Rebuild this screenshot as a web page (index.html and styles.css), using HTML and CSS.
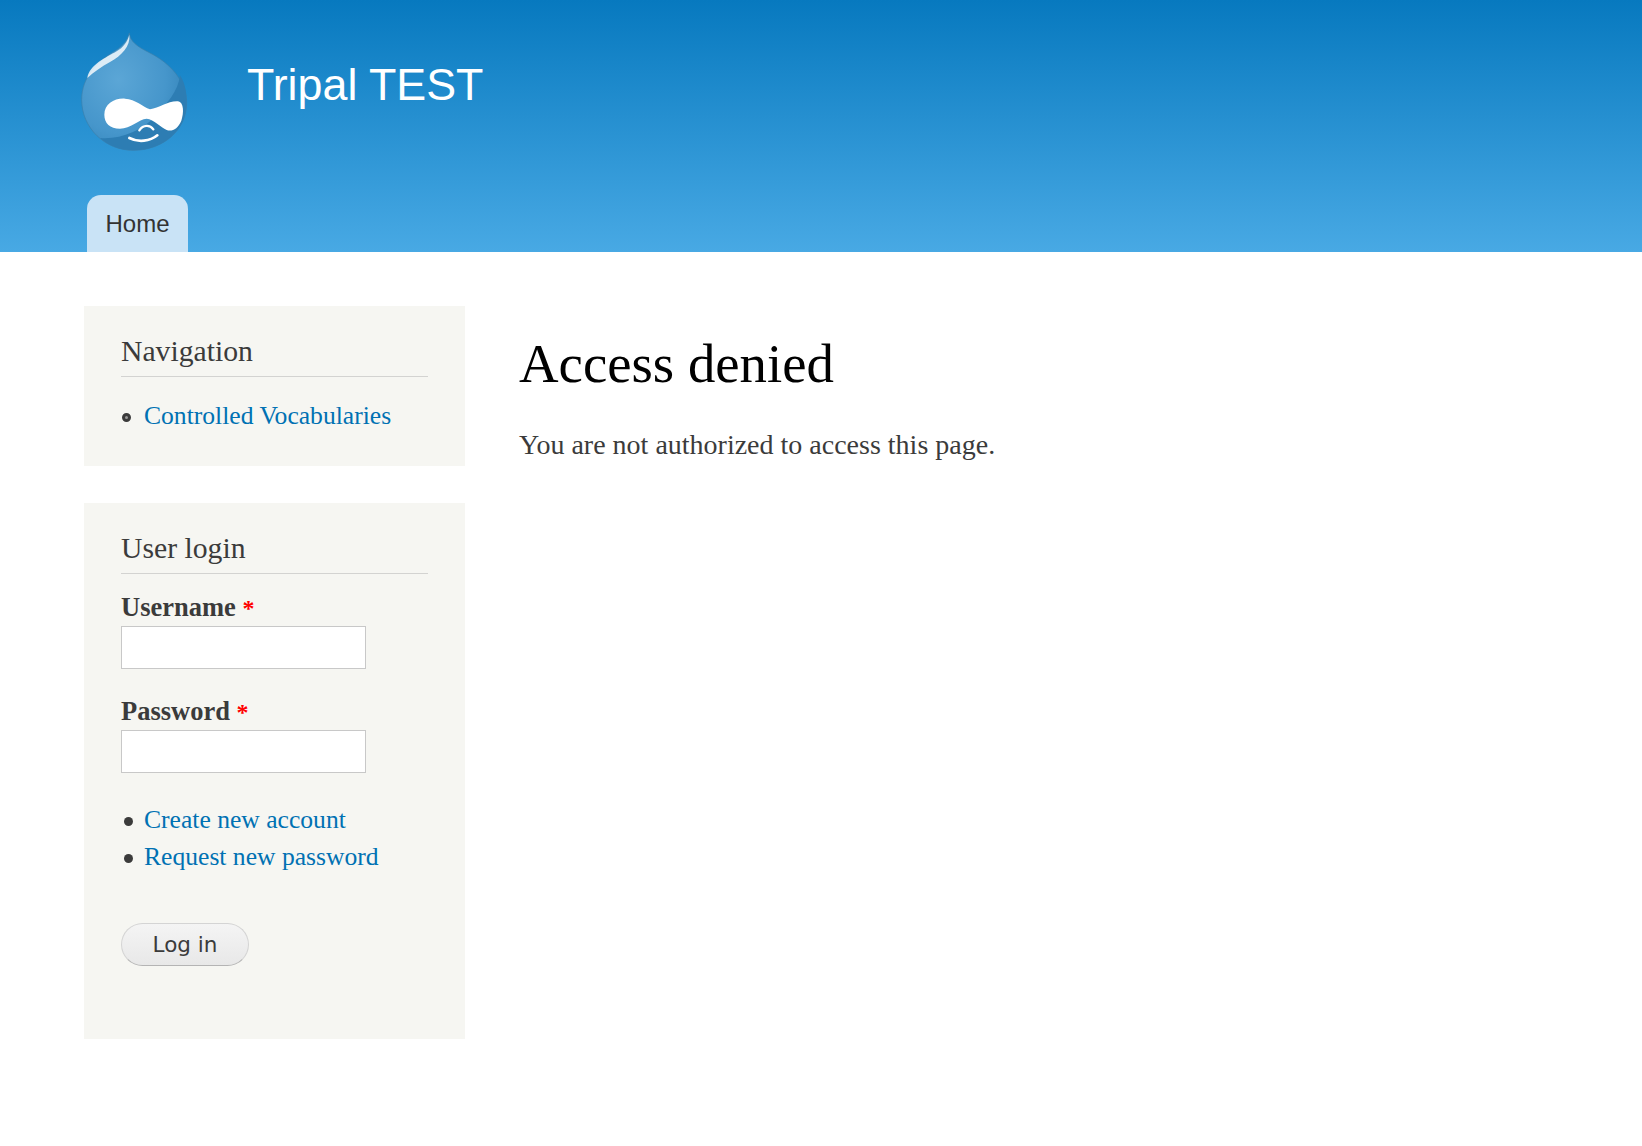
FILE: index.html
```html
<!DOCTYPE html>
<html lang="en">
<head>
    <title>Access denied | Tripal TEST</title>
    <meta charset="UTF-8" />
    <link rel="stylesheet" href="styles.css">
</head>
<body>
    <header class="site-header">
        <div class="branding">
            <a class="logo" href="#" aria-label="Home">
                <svg width="130" height="140" viewBox="0 0 390 420">
                    <defs>
                        <radialGradient id="dropFill" cx="0.35" cy="0.4" r="0.75">
                            <stop offset="0" stop-color="#5ba6d6"/>
                            <stop offset="0.6" stop-color="#4696cb"/>
                            <stop offset="1" stop-color="#2f80b6"/>
                        </radialGradient>
                    </defs>
                    <path fill="url(#dropFill)" stroke="#3a7fab" stroke-width="2" d="M178 45C180 70 200 85 240 105C300 135 350 190 350 255C350 335 280 397 190 397C105 397 35 330 35 245C35 175 85 130 125 105C155 88 172 70 178 45Z"/>
                    <path fill="#2d7db3" d="M330 172C348 200 350 230 350 255C350 335 280 397 190 397C150 397 115 383 90 360C150 365 215 340 255 295C290 258 325 220 330 172Z"/>
                    <path fill="#fff" opacity="0.8" d="M52 180C58 140 110 118 140 100C160 88 172 72 178 50C182 85 155 112 120 132C95 146 72 162 52 180Z"/>
                    <path fill="#fff" d="M103 290C103 258 133 240 165 242C197 244 218 266 240 274C268 270 295 248 324 250C342 253 342 285 334 308C324 332 306 342 290 336C272 328 252 304 230 302C206 304 182 332 150 332C120 332 103 316 103 290Z"/>
                    <path fill="none" stroke="#fff" stroke-width="8" stroke-linecap="round" d="M178 360C205 374 240 370 262 352"/>
                    <path fill="none" stroke="#fff" stroke-width="7" stroke-linecap="round" d="M208 337C220 320 240 320 250 334"/>
                </svg>
            </a>
            <div class="site-name">Tripal TEST</div>
        </div>
        <nav class="tabs">
            <a class="tab" href="#">Home</a>
        </nav>
    </header>

    <div class="layout">
        <aside class="sidebar">
            <section class="block block-nav">
                <h2>Navigation</h2>
                <ul class="links">
                    <li class="leaf"><a href="#">Controlled Vocabularies</a></li>
                </ul>
            </section>

            <section class="block block-login">
                <h2>User login</h2>
                <form>
                    <div class="field">
                        <label for="username">Username <span class="required">*</span></label>
                        <input type="text" id="username">
                    </div>
                    <div class="field">
                        <label for="password">Password <span class="required">*</span></label>
                        <input type="password" id="password">
                    </div>
                    <ul class="links login-links">
                        <li><a href="#">Create new account</a></li>
                        <li><a href="#">Request new password</a></li>
                    </ul>
                    <button type="button" class="btn">Log in</button>
                </form>
            </section>
        </aside>

        <main class="content">
            <h1>Access denied</h1>
            <p>You are not authorized to access this page.</p>
        </main>
    </div>
</body>
</html>
```

FILE: styles.css
```css
body {
    margin: 0;
    font-family: "Liberation Serif", serif;
    color: #3b3b3b;
    background: #fff;
}

a {
    color: #0071b3;
    text-decoration: none;
}

/* Header */
.site-header {
    height: 252px;
    display: flex;
    flex-direction: column;
    justify-content: space-between;
    background: linear-gradient(to bottom, #0779bf, #48a9e4);
}

.branding {
    display: flex;
    padding: 18px 0 0 70px;
}

.logo {
    display: block;
    height: 140px;
}

.site-name {
    margin: 36px 0 0 47px;
    font-family: "Liberation Sans", sans-serif;
    font-size: 44.8px;
    line-height: 60px;
    color: #fff;
}

.tabs {
    display: flex;
    padding-left: 87px;
}

.tab {
    width: 101px;
    height: 57px;
    box-sizing: border-box;
    border-radius: 14px 14px 0 0;
    background: #c9e3f6;
    color: #333;
    font-family: "Liberation Sans", sans-serif;
    font-size: 24px;
    line-height: 57px;
    text-align: center;
}

/* Page layout */
.layout {
    display: flex;
    padding: 54px 0 0 84px;
}

.sidebar {
    width: 381px;
    flex-shrink: 0;
}

.block {
    box-sizing: border-box;
    padding: 28px 37px 0;
    background: #f6f6f2;
}

.block-nav {
    height: 160px;
    margin-bottom: 37px;
}

.block-login {
    height: 536px;
}

.block h2 {
    margin: 0;
    height: 42px;
    border-bottom: 1px solid #d3d3d1;
    font-size: 29.7px;
    font-weight: normal;
    line-height: 34px;
}

.links {
    margin: 0;
    padding: 0;
    list-style: none;
    font-size: 25.6px;
    line-height: 37px;
}

.block-nav .links {
    margin-top: 20px;
}

.links li {
    display: flex;
    align-items: center;
}

.links li::before {
    content: "";
    width: 9px;
    height: 9px;
    margin: 3px 11px 0 3px;
    border-radius: 50%;
    background: #3b3b3b;
}

.links li.leaf::before {
    box-sizing: border-box;
    margin: 3px 13px 0 1px;
    border: 3px solid #3b3b3b;
    background: #999;
}

/* Login form */
.field {
    margin-bottom: 26px;
}

.field:first-child {
    margin-top: 17px;
}

.field label {
    display: block;
    height: 35px;
    font-size: 26.5px;
    font-weight: bold;
    line-height: 32px;
}

.required {
    color: #f00;
    font-size: 24px;
}

.field input {
    display: block;
    box-sizing: border-box;
    width: 245px;
    height: 43px;
    padding: 0 8px;
    border: 1px solid #c8c8c8;
    background: #fff;
}

.login-links {
    margin-top: 28px;
}

.btn {
    display: block;
    width: 128px;
    height: 43px;
    margin-top: 48px;
    padding: 0;
    border: 1px solid #d4d4d4;
    border-bottom-color: #b4b4b4;
    border-radius: 22px;
    background: linear-gradient(to bottom, #f4f4f4, #e8e8e8);
    color: #3b3b3b;
    font-family: "DejaVu Sans", sans-serif;
    font-size: 21.5px;
}

/* Main content */
.content {
    margin-left: 54px;
}

.content h1 {
    margin: 28px 0 0;
    color: #000;
    font-size: 54.8px;
    font-weight: normal;
    line-height: 60px;
}

.content p {
    margin: 33px 0 0;
    font-size: 28px;
    line-height: 36px;
}
```
